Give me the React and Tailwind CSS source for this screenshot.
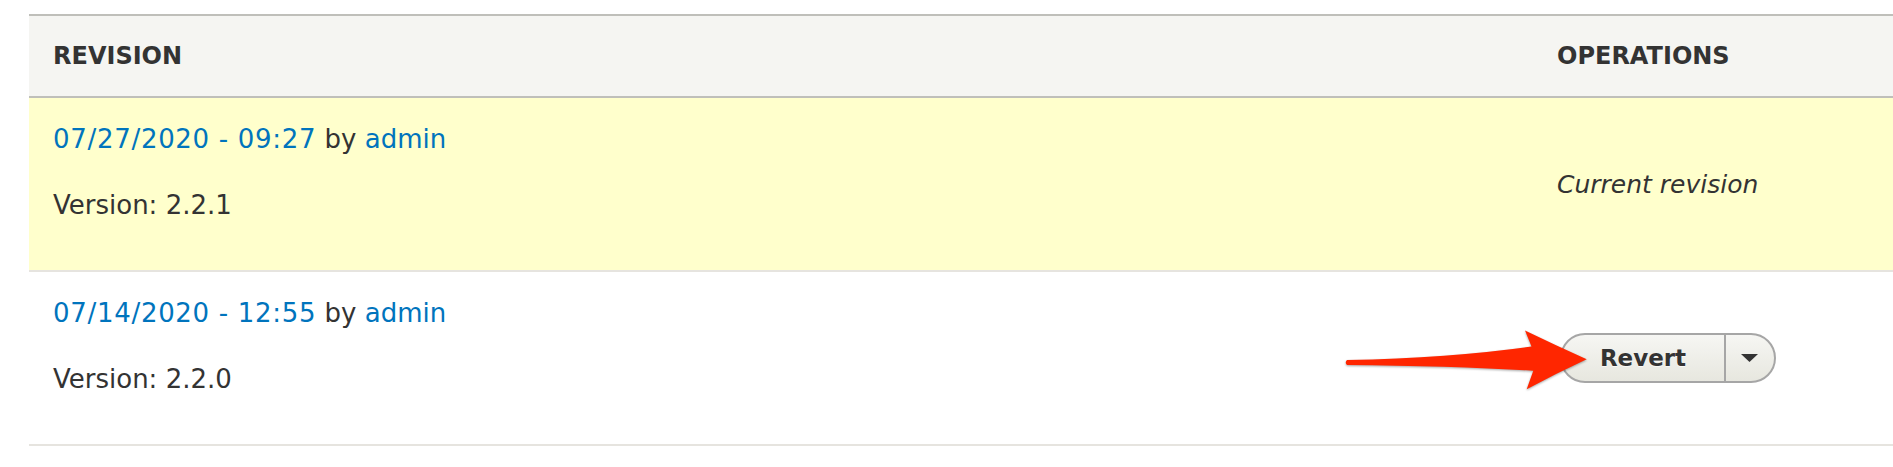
import React from 'react';

const revisions = [
    { date: '07/27/2020 - 09:27', author: 'admin', version: '2.2.1', current: true },
    { date: '07/14/2020 - 12:55', author: 'admin', version: '2.2.0', current: false },
];

const RevertButton = () => (
    <div className="flex h-[50px] w-[216px] rounded-full border-2 border-[#a6a6a6] bg-linear-to-b from-[#f6f6f3] to-[#e7e7df] overflow-hidden">
        <button className="w-[162px] h-full flex items-center justify-center text-[23px] font-bold text-[#333] [text-shadow:0_1px_0_rgba(255,255,255,0.7)]">
            Revert
        </button>
        <div className="w-[50px] h-full border-l-2 border-[#a6a6a6] flex items-center justify-center pr-[2px]">
            <svg width="17" height="8" viewBox="0 0 17 8">
                <polygon points="0,0 17,0 8.5,8" fill="#333" />
            </svg>
        </div>
    </div>
);

const Arrow = () => (
    <svg
        className="absolute left-[1340px] top-[325px] drop-shadow-[0_1px_1px_rgba(0,0,0,0.35)]"
        width="260"
        height="70"
        viewBox="0 0 260 70"
    >
        <path
            d="M7 35 Q110 33 191.5 21.5 L185 5.5 Q215 20 246.7 34.3 Q215 49 186.7 64.3 L193.3 45.7 Q110 41 7 40 Q4.5 37.5 7 35 Z"
            fill="#ff2600"
        />
    </svg>
);

const App = () => {
    return (
        <div className="relative w-[1893px] h-[467px] bg-white overflow-hidden pt-[14px] pl-[29px] font-['DejaVu_Sans',sans-serif] text-[#333]">
            <div className="border-t-2 border-[#bfbfba]">
                {/* Header */}
                <div className="flex items-center h-[82px] bg-[#f5f5f2] border-b-2 border-[#bfbfba] text-[24px] font-bold uppercase">
                    <div className="flex-1 pl-[24px]">Revision</div>
                    <div className="w-[360px] pl-[24px]">Operations</div>
                </div>

                {revisions.map((rev) => (
                    <div
                        key={rev.version}
                        className={`flex border-b-2 border-[#e6e4df] ${rev.current ? 'bg-[#ffffcc]' : 'bg-white'}`}
                    >
                        <div className="flex-1 pl-[24px] pt-[23px] pb-[47px] text-[26px]">
                            <div className="leading-[36px]">
                                <a href="#" className="text-[#0074bd] tracking-[0.7px]">{rev.date}</a>
                                {' by '}
                                <a href="#" className="text-[#0074bd]">{rev.author}</a>
                            </div>
                            <p className="mt-[30px] leading-[36px]">Version: {rev.version}</p>
                        </div>
                        <div className="w-[360px] pl-[24px] flex items-center">
                            {rev.current ? (
                                <em className="text-[25px] pt-[2px]">Current revision</em>
                            ) : (
                                <div className="pl-[3px]">
                                    <RevertButton />
                                </div>
                            )}
                        </div>
                    </div>
                ))}
            </div>
            <Arrow />
        </div>
    );
};

export default App;
